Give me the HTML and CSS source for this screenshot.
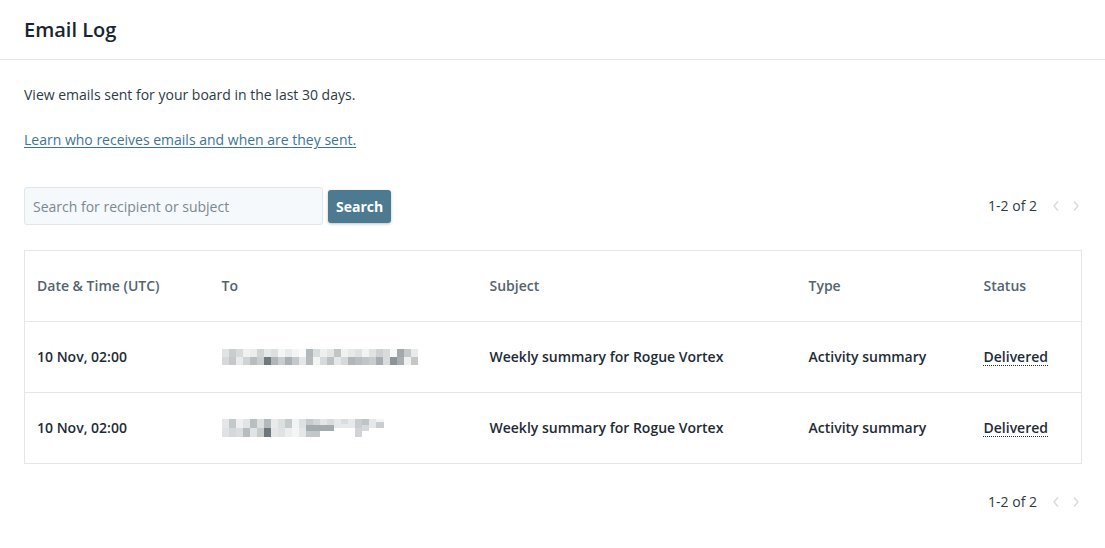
FILE: index.html
```html
<!DOCTYPE html>
<html lang="en">
<head>
<meta charset="utf-8">
<title>Email Log</title>
<link rel="stylesheet" href="styles.css">
</head>
<body>
<header class="page-header">
  <h1 class="title">Email Log</h1>
</header>
<main class="content">
  <p class="intro">View emails sent for your board in the last 30 days.</p>
  <p class="learn"><a href="#" class="link">Learn who receives emails and when are they sent.</a></p>

  <div class="toolbar">
    <form class="search" onsubmit="return false">
      <input class="search-input" type="text" placeholder="Search for recipient or subject">
      <button class="search-btn" type="submit">Search</button>
    </form>
    <div class="pager">
      <span class="pager-text">1-2 of 2</span>
      <span class="chev"><svg width="8" height="12" viewBox="0 0 8 12"><path d="M6 1.5 L2 6 L6 10.5" fill="none" stroke="#d3d9de" stroke-width="1.3"/></svg></span>
      <span class="chev"><svg width="8" height="12" viewBox="0 0 8 12"><path d="M2 1.5 L6 6 L2 10.5" fill="none" stroke="#d3d9de" stroke-width="1.3"/></svg></span>
    </div>
  </div>

  <table class="log">
    <colgroup>
      <col class="c-date"><col class="c-to"><col class="c-subj"><col class="c-type"><col>
    </colgroup>
    <thead>
      <tr><th>Date &amp; Time (UTC)</th><th>To</th><th>Subject</th><th>Type</th><th>Status</th></tr>
    </thead>
    <tbody>
      <tr>
        <td>10 Nov, 02:00</td>
        <td><svg class="blur" width="196" height="16" viewBox="0 0 196 16" shape-rendering="crispEdges">
          <rect x="0" y="0" width="7" height="8" fill="#e0e3e4"/><rect x="7" y="0" width="7" height="8" fill="#c9cdce"/><rect x="14" y="0" width="7" height="8" fill="#d8dbdc"/><rect x="21" y="0" width="7" height="8" fill="#f0f1f1"/><rect x="28" y="0" width="7" height="8" fill="#ececec"/><rect x="35" y="0" width="7" height="8" fill="#cfd3d4"/><rect x="42" y="0" width="7" height="8" fill="#e6e8e8"/><rect x="49" y="0" width="7" height="8" fill="#dcdfe0"/><rect x="56" y="0" width="7" height="8" fill="#f4f5f5"/><rect x="63" y="0" width="7" height="8" fill="#e9ebeb"/><rect x="70" y="0" width="7" height="8" fill="#f3f4f4"/><rect x="77" y="0" width="7" height="8" fill="#fafafa"/><rect x="84" y="0" width="7" height="8" fill="#b3b8ba"/><rect x="91" y="0" width="7" height="8" fill="#dadddd"/><rect x="98" y="0" width="7" height="8" fill="#eeefef"/><rect x="105" y="0" width="7" height="8" fill="#e4e6e6"/><rect x="112" y="0" width="7" height="8" fill="#c0c5c6"/><rect x="119" y="0" width="7" height="8" fill="#f0f1f1"/><rect x="126" y="0" width="7" height="8" fill="#e8eaea"/><rect x="133" y="0" width="7" height="8" fill="#dfe2e2"/><rect x="140" y="0" width="7" height="8" fill="#f2f3f3"/><rect x="147" y="0" width="7" height="8" fill="#e0e2e3"/><rect x="154" y="0" width="7" height="8" fill="#cdd1d2"/><rect x="161" y="0" width="7" height="8" fill="#d8dbdc"/><rect x="168" y="0" width="7" height="8" fill="#f7f7f7"/><rect x="175" y="0" width="7" height="8" fill="#a2a8ab"/><rect x="182" y="0" width="7" height="8" fill="#c5c9ca"/><rect x="189" y="0" width="7" height="8" fill="#e9ebeb"/>
          <rect x="0" y="8" width="7" height="8" fill="#d6d9da"/><rect x="7" y="8" width="7" height="8" fill="#c4c8c9"/><rect x="14" y="8" width="7" height="8" fill="#e9ebeb"/><rect x="21" y="8" width="7" height="8" fill="#cfd3d4"/><rect x="28" y="8" width="7" height="8" fill="#b8bdbf"/><rect x="35" y="8" width="7" height="8" fill="#c9cdce"/><rect x="42" y="8" width="7" height="8" fill="#6f787d"/><rect x="49" y="8" width="7" height="8" fill="#b0b6b8"/><rect x="56" y="8" width="7" height="8" fill="#c9cdce"/><rect x="63" y="8" width="7" height="8" fill="#a9afb2"/><rect x="70" y="8" width="7" height="8" fill="#c4c8ca"/><rect x="77" y="8" width="7" height="8" fill="#e4e6e7"/><rect x="84" y="8" width="7" height="8" fill="#b5bbbd"/><rect x="91" y="8" width="7" height="8" fill="#f3f4f4"/><rect x="98" y="8" width="7" height="8" fill="#d7dadb"/><rect x="105" y="8" width="7" height="8" fill="#bcc1c3"/><rect x="112" y="8" width="7" height="8" fill="#e5e7e8"/><rect x="119" y="8" width="7" height="8" fill="#d6d9da"/><rect x="126" y="8" width="7" height="8" fill="#b1b7b9"/><rect x="133" y="8" width="7" height="8" fill="#b9bec0"/><rect x="140" y="8" width="7" height="8" fill="#c1c5c7"/><rect x="147" y="8" width="7" height="8" fill="#c8cccd"/><rect x="154" y="8" width="7" height="8" fill="#a6acaf"/><rect x="161" y="8" width="7" height="8" fill="#d9dcdd"/><rect x="168" y="8" width="7" height="8" fill="#8d9499"/><rect x="175" y="8" width="7" height="8" fill="#a9afb1"/><rect x="182" y="8" width="7" height="8" fill="#eff0f0"/><rect x="189" y="8" width="7" height="8" fill="#c3c7c8"/>
        </svg></td>
        <td>Weekly summary for Rogue Vortex</td>
        <td>Activity summary</td>
        <td><span class="status">Delivered</span></td>
      </tr>
      <tr>
        <td>10 Nov, 02:00</td>
        <td><svg class="blur" width="162" height="18" viewBox="0 0 162 18" shape-rendering="crispEdges">
          <rect x="0" y="0" width="7" height="9" fill="#e4e6e7"/><rect x="7" y="0" width="7" height="9" fill="#c3c8ca"/><rect x="14" y="0" width="7" height="9" fill="#eef0f0"/><rect x="21" y="0" width="7" height="9" fill="#e2e5e5"/><rect x="28" y="0" width="7" height="9" fill="#b9bec0"/><rect x="35" y="0" width="7" height="9" fill="#dde0e1"/><rect x="42" y="0" width="7" height="9" fill="#b4b9bb"/><rect x="49" y="0" width="7" height="9" fill="#e8eaeb"/><rect x="56" y="0" width="7" height="9" fill="#dcdfe0"/><rect x="63" y="0" width="7" height="9" fill="#c5cacb"/><rect x="70" y="0" width="7" height="9" fill="#f2f3f3"/><rect x="77" y="0" width="7" height="9" fill="#dee1e2"/><rect x="84" y="0" width="7" height="9" fill="#c6cacc"/><rect x="91" y="0" width="7" height="9" fill="#d2d6d7"/><rect x="98" y="0" width="7" height="9" fill="#e3e5e6"/><rect x="105" y="0" width="7" height="9" fill="#d9dcdd"/><rect x="112" y="0" width="7" height="9" fill="#e6e8e9"/><rect x="119" y="0" width="7" height="9" fill="#dadddf"/><rect x="126" y="0" width="7" height="9" fill="#e8eaea"/><rect x="133" y="0" width="7" height="9" fill="#c9cdcf"/><rect x="140" y="0" width="7" height="9" fill="#bfc4c6"/><rect x="147" y="0" width="7" height="9" fill="#e5e7e8"/><rect x="154" y="0" width="8" height="9" fill="#f2f3f4"/>
          <rect x="0" y="9" width="7" height="9" fill="#dfe2e3"/><rect x="7" y="9" width="7" height="9" fill="#d4d8d9"/><rect x="14" y="9" width="7" height="9" fill="#dadddf"/><rect x="21" y="9" width="7" height="9" fill="#b7bcbe"/><rect x="28" y="9" width="7" height="9" fill="#e1e4e5"/><rect x="35" y="9" width="7" height="9" fill="#c8cccd"/><rect x="42" y="9" width="7" height="9" fill="#6e777c"/><rect x="49" y="9" width="7" height="9" fill="#e4e6e7"/><rect x="56" y="9" width="7" height="9" fill="#dfe2e3"/><rect x="63" y="9" width="7" height="9" fill="#eceeee"/><rect x="70" y="9" width="7" height="9" fill="#f4f5f5"/><rect x="77" y="9" width="7" height="9" fill="#e4e6e7"/><rect x="84" y="9" width="7" height="9" fill="#c4c8ca"/><rect x="91" y="9" width="7" height="9" fill="#c2c7c8"/><rect x="98" y="9" width="7" height="9" fill="#ffffff"/><rect x="105" y="9" width="7" height="9" fill="#ffffff"/><rect x="112" y="9" width="7" height="9" fill="#ffffff"/><rect x="119" y="9" width="7" height="9" fill="#ffffff"/><rect x="126" y="9" width="7" height="9" fill="#ffffff"/><rect x="133" y="9" width="7" height="9" fill="#d0d4d6"/><rect x="140" y="9" width="7" height="9" fill="#ffffff"/><rect x="147" y="9" width="7" height="9" fill="#ffffff"/><rect x="154" y="9" width="8" height="9" fill="#ffffff"/>
          <rect x="84" y="6" width="28" height="6" fill="#a4abae"/><rect x="119" y="5" width="14" height="4" fill="#e7e9ea"/><rect x="140" y="6" width="7" height="6" fill="#d6d9db"/><rect x="154" y="3" width="8" height="6" fill="#c9cdd0"/>
        </svg></td>
        <td>Weekly summary for Rogue Vortex</td>
        <td>Activity summary</td>
        <td><span class="status">Delivered</span></td>
      </tr>
    </tbody>
  </table>

  <div class="footer-pager">
    <div class="pager">
      <span class="pager-text">1-2 of 2</span>
      <span class="chev"><svg width="8" height="12" viewBox="0 0 8 12"><path d="M6 1.5 L2 6 L6 10.5" fill="none" stroke="#d3d9de" stroke-width="1.3"/></svg></span>
      <span class="chev"><svg width="8" height="12" viewBox="0 0 8 12"><path d="M2 1.5 L6 6 L2 10.5" fill="none" stroke="#d3d9de" stroke-width="1.3"/></svg></span>
    </div>
  </div>
</main>
</body>
</html>
```

FILE: styles.css
```css
* { box-sizing: border-box; }

html, body {
  margin: 0;
  padding: 0;
  background: #ffffff;
}

body {
  font-family: "Open Sans", "Noto Sans", "Liberation Sans", sans-serif;
  font-size: 14px;
  line-height: 20px;
  color: #1e2b36;
}

.page-header {
  height: 60px;
  padding: 0 24px;
  display: flex;
  align-items: center;
  border-bottom: 1px solid #e2e5e9;
}

.title {
  margin: 0;
  font-size: 20px;
  font-weight: 600;
  line-height: 28px;
  color: #172532;
}

.content {
  padding: 25px 23px 0 24px;
}

.intro {
  margin: 0;
  color: #2c3a45;
}

.learn {
  margin: 25px 0 0;
}

.link {
  color: #3d7592;
  text-decoration: underline;
  text-underline-offset: 2px;
}

.toolbar {
  margin-top: 37px;
  display: flex;
  align-items: center;
  justify-content: space-between;
  height: 38px;
}

.search {
  display: flex;
  align-items: center;
  gap: 5px;
  margin: 0;
}

.search-input {
  width: 299px;
  height: 38px;
  padding: 0 8px;
  border: 1px solid #e1e6ea;
  border-radius: 3px;
  background: #f6f9fb;
  font-family: inherit;
  font-size: 14px;
  color: #1e2b36;
  outline: none;
}

.search-input::placeholder {
  color: #7b8892;
}

.search-btn {
  height: 33px;
  padding: 0 8px;
  border: none;
  border-radius: 3px;
  background: #4b7a91;
  color: #ffffff;
  font-family: inherit;
  font-size: 14px;
  font-weight: 700;
  box-shadow: 0 1px 3px rgba(0, 0, 0, 0.25);
  cursor: pointer;
}

.pager {
  display: flex;
  align-items: center;
  gap: 12px;
  padding-right: 2px;
}

.pager-text {
  color: #2c3a45;
  margin-right: 3px;
}

.chev {
  display: inline-flex;
  width: 8px;
  height: 12px;
}

.log {
  margin-top: 25px;
  width: 100%;
  border-collapse: collapse;
  table-layout: fixed;
  border: 1px solid #e3e7eb;
}

.c-date { width: 185px; }
.c-to { width: 268px; }
.c-subj { width: 319px; }
.c-type { width: 175px; }

.log th,
.log td {
  height: 71px;
  padding: 0 12px;
  text-align: left;
  vertical-align: middle;
  font-weight: 600;
  white-space: nowrap;
}

.log th {
  color: #55636e;
}

.log td {
  color: #1e2b36;
  border-top: 1px solid #e3e7eb;
}

.blur {
  display: block;
}

.status {
  text-decoration: underline dotted;
  text-underline-offset: 3px;
  text-decoration-thickness: 1px;
}

.footer-pager {
  margin-top: 28px;
  display: flex;
  justify-content: flex-end;
}
```
